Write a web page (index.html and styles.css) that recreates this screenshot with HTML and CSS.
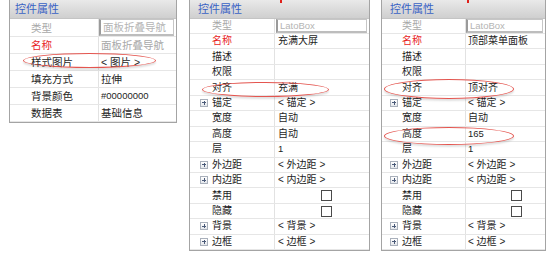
FILE: index.html
```html
<!DOCTYPE html>
<html>
<head>
   <meta charset="UTF-8">
   <title>控件属性</title>
   <link rel="stylesheet" href="styles.css">
</head>
<body>
   <div class="board">
       <span class="tip tip-a"></span>
       <span class="tip tip-b"></span>

       <section class="panel panel-one">
           <div class="panel-head">控件属性</div>
           <div class="row first"><div class="key muted">类型</div><div class="val"><span class="field">面板折叠导航</span></div></div>
           <div class="row"><div class="key red">名称</div><div class="val muted">面板折叠导航</div></div>
           <div class="row"><div class="key">样式图片</div><div class="val">&lt; 图片 &gt;</div></div>
           <div class="row"><div class="key">填充方式</div><div class="val">拉伸</div></div>
           <div class="row"><div class="key">背景颜色</div><div class="val latin">#00000000</div></div>
           <div class="row"><div class="key">数据表</div><div class="val">基础信息</div></div>
           <span class="mark mark-one"></span>
       </section>

       <section class="panel panel-two">
           <div class="panel-head">控件属性</div>
           <div class="row first"><div class="key muted">类型</div><div class="val"><span class="field latin">LatoBox</span></div></div>
           <div class="row"><div class="key red">名称</div><div class="val">充满大屏</div></div>
           <div class="row"><div class="key">描述</div><div class="val"></div></div>
           <div class="row"><div class="key">权限</div><div class="val"></div></div>
           <div class="row"><div class="key">对齐</div><div class="val">充满</div></div>
           <div class="row"><div class="key"><i class="plus"></i>锚定</div><div class="val">&lt; 锚定 &gt;</div></div>
           <div class="row"><div class="key">宽度</div><div class="val">自动</div></div>
           <div class="row"><div class="key">高度</div><div class="val">自动</div></div>
           <div class="row"><div class="key">层</div><div class="val latin">1</div></div>
           <div class="row"><div class="key"><i class="plus"></i>外边距</div><div class="val">&lt; 外边距 &gt;</div></div>
           <div class="row"><div class="key"><i class="plus"></i>内边距</div><div class="val">&lt; 内边距 &gt;</div></div>
           <div class="row"><div class="key">禁用</div><div class="val check-cell"><span class="check"></span></div></div>
           <div class="row"><div class="key">隐藏</div><div class="val check-cell"><span class="check"></span></div></div>
           <div class="row"><div class="key"><i class="plus"></i>背景</div><div class="val">&lt; 背景 &gt;</div></div>
           <div class="row"><div class="key"><i class="plus"></i>边框</div><div class="val">&lt; 边框 &gt;</div></div>
           <span class="mark mark-two"></span>
       </section>

       <section class="panel panel-three">
           <div class="panel-head">控件属性</div>
           <div class="row first"><div class="key muted">类型</div><div class="val"><span class="field latin">LatoBox</span></div></div>
           <div class="row"><div class="key red">名称</div><div class="val">顶部菜单面板</div></div>
           <div class="row"><div class="key">描述</div><div class="val"></div></div>
           <div class="row"><div class="key">权限</div><div class="val"></div></div>
           <div class="row"><div class="key">对齐</div><div class="val">顶对齐</div></div>
           <div class="row"><div class="key"><i class="plus"></i>锚定</div><div class="val">&lt; 锚定 &gt;</div></div>
           <div class="row"><div class="key">宽度</div><div class="val">自动</div></div>
           <div class="row"><div class="key">高度</div><div class="val latin">165</div></div>
           <div class="row"><div class="key">层</div><div class="val latin">1</div></div>
           <div class="row"><div class="key"><i class="plus"></i>外边距</div><div class="val">&lt; 外边距 &gt;</div></div>
           <div class="row"><div class="key"><i class="plus"></i>内边距</div><div class="val">&lt; 内边距 &gt;</div></div>
           <div class="row"><div class="key">禁用</div><div class="val check-cell"><span class="check"></span></div></div>
           <div class="row"><div class="key">隐藏</div><div class="val check-cell"><span class="check"></span></div></div>
           <div class="row"><div class="key"><i class="plus"></i>背景</div><div class="val">&lt; 背景 &gt;</div></div>
           <div class="row"><div class="key"><i class="plus"></i>边框</div><div class="val">&lt; 边框 &gt;</div></div>
           <span class="mark mark-three"></span>
           <span class="mark mark-four"></span>
       </section>
   </div>
</body>
</html>
```

FILE: styles.css
```css
* {
    margin: 0;
    padding: 0;
    box-sizing: border-box;
}

body {
    background: #ffffff;
    font-family: "Liberation Sans", "Noto Sans CJK SC", sans-serif;
    color: #1e1e1e;
}

.board {
    position: relative;
    display: flex;
    align-items: flex-start;
    padding-left: 9px;
}

.panel {
    position: relative;
    border: 1px solid #a4a4a4;
    border-top: none;
    background: #ffffff;
    font-size: 10px;
}

.panel-one {
    width: 168px;
    font-size: 10.5px;
}

.panel-two {
    width: 181px;
    margin-left: 12px;
}

.panel-three {
    width: 165px;
    margin-left: 11px;
}

.panel-head {
    height: 19px;
    line-height: 19px;
    padding-left: 8px;
    color: #3a62c4;
    background: linear-gradient(#e9e9e9, #cfcfcf);
    border-bottom: 1px solid #c4c4c4;
    font-size: 11px;
}

.panel-one .panel-head {
    padding-left: 5px;
}

.row {
    display: grid;
    grid-template-columns: 85px 1fr;
    height: 15.45px;
    border-bottom: 1px solid #e6e6e6;
    line-height: 14px;
    white-space: nowrap;
}

.row.first {
    height: 15px;
}

.panel-one .row {
    grid-template-columns: 89px 1fr;
    height: 17px;
    line-height: 16px;
}

.panel-one .row.first {
    height: 18px;
}

.panel-three .row {
    grid-template-columns: 84px 1fr;
}

.row:last-child {
    border-bottom: none;
}

.key {
    display: flex;
    align-items: center;
    padding-left: 22px;
    border-right: 1px solid #e2e2e2;
    position: relative;
}

.panel-one .key {
    padding-left: 21px;
}

.panel-three .key {
    padding-left: 20px;
}

.val {
    display: flex;
    align-items: center;
    padding-left: 3px;
    overflow: hidden;
}

.panel-one .val,
.panel-three .val {
    padding-left: 2px;
}

.muted {
    color: #a8a8a8;
}

.red {
    color: #e8231e;
}

.latin {
    font-size: 9.5px;
}

.field {
    display: block;
    width: 100%;
    height: 100%;
    margin-left: -2px;
    padding-left: 2px;
    border: 1px solid #c6c6c6;
    border-left: 2px solid #9a9a9a;
    border-bottom: 2px solid #bdbdbd;
    color: #b4b4b4;
    line-height: 12px;
}

.panel-one .field {
    line-height: 15px;
}

.plus {
    position: absolute;
    left: 10px;
    top: 50%;
    width: 8px;
    height: 8px;
    margin-top: -4px;
    border: 1px solid #a9b0bb;
    background: linear-gradient(#ffffff, #e4e7ec);
}

.panel-three .plus {
    left: 8px;
}

.plus::before,
.plus::after {
    content: '';
    position: absolute;
    background: #4a5a78;
}

.plus::before {
    left: 1px;
    top: 2.5px;
    width: 4px;
    height: 1px;
}

.plus::after {
    left: 2.5px;
    top: 1px;
    width: 1px;
    height: 4px;
}

.check-cell {
    justify-content: flex-end;
    padding-right: 37px;
}

.panel-three .check-cell {
    padding-right: 23px;
}

.check {
    width: 11px;
    height: 11px;
    border: 1px solid #4a4a4a;
    background: #ffffff;
}

/* red annotation ovals drawn over the grid */
.mark {
    position: absolute;
    border: 1px solid #e4554f;
    border-radius: 50%;
    box-shadow: 0 2px 2px rgba(0, 0, 0, 0.12);
    pointer-events: none;
}

.mark-one {
    left: 13px;
    top: 53px;
    width: 133px;
    height: 15px;
}

.mark-two {
    left: 12px;
    top: 82px;
    width: 127px;
    height: 15px;
}

.mark-three {
    left: 2px;
    top: 79px;
    width: 130px;
    height: 20px;
}

.mark-four {
    left: 2px;
    top: 127px;
    width: 130px;
    height: 18px;
}

.tip {
    position: absolute;
    top: 0;
    width: 2px;
    height: 3px;
    background: #e0201a;
    z-index: 2;
}

.tip-a {
    left: 280px;
}

.tip-b {
    left: 467px;
}
```
